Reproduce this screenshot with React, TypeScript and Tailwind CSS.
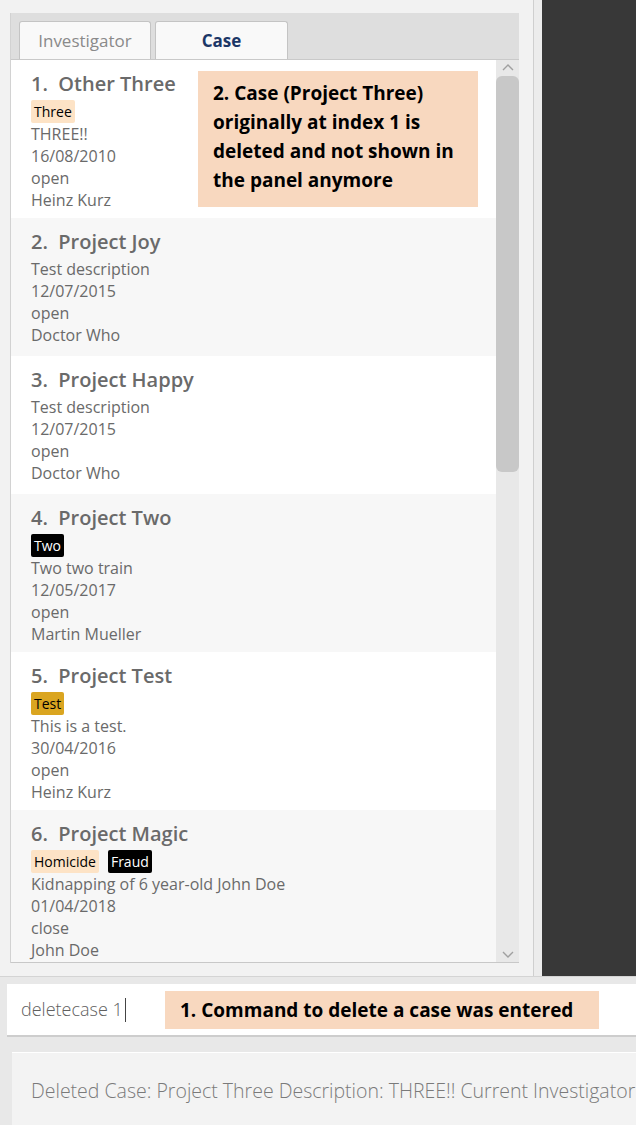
import React from 'react';

type Tag = { label: string; tone: 'peach' | 'black' | 'gold' };

type CaseItem = {
  title: string;
  tags: Tag[];
  lines: string[];
};

const cases: CaseItem[] = [
  { title: 'Other Three', tags: [{ label: 'Three', tone: 'peach' }], lines: ['THREE!!', '16/08/2010', 'open', 'Heinz Kurz'] },
  { title: 'Project Joy', tags: [], lines: ['Test description', '12/07/2015', 'open', 'Doctor Who'] },
  { title: 'Project Happy', tags: [], lines: ['Test description', '12/07/2015', 'open', 'Doctor Who'] },
  { title: 'Project Two', tags: [{ label: 'Two', tone: 'black' }], lines: ['Two two train', '12/05/2017', 'open', 'Martin Mueller'] },
  { title: 'Project Test', tags: [{ label: 'Test', tone: 'gold' }], lines: ['This is a test.', '30/04/2016', 'open', 'Heinz Kurz'] },
  {
    title: 'Project Magic',
    tags: [
      { label: 'Homicide', tone: 'peach' },
      { label: 'Fraud', tone: 'black' },
    ],
    lines: ['Kidnapping of 6 year-old John Doe', '01/04/2018', 'close', 'John Doe'],
  },
];

const toneClass = {
  peach: 'bg-[#fde3c6] text-black',
  black: 'bg-black text-white',
  gold: 'bg-[#daa520] text-black',
};

function CaseCard({ item, index }: { item: CaseItem; index: number }) {
  const shaded = index % 2 === 1;
  const hasTags = item.tags.length > 0;
  return (
    <div className={`pl-[20px] pt-[11px] ${hasTags ? 'pb-[7px]' : 'pb-[10px]'} ${shaded ? 'bg-[#f7f7f7]' : 'bg-white'}`}>
      <div className="text-[20px] leading-[26px] font-semibold text-[#6a6a6a] mb-[3px]">
        {index + 1}.&nbsp;&nbsp;{item.title}
      </div>
      {hasTags && (
        <div className="flex gap-[9px]">
          {item.tags.map((t) => (
            <span key={t.label} className={`px-[3px] rounded-[2px] text-[14px] leading-[23px] ${toneClass[t.tone]}`}>
              {t.label}
            </span>
          ))}
        </div>
      )}
      {item.lines.map((l, i) => (
        <div key={i} className="text-[16px] leading-[22px] text-[#6a6a6a]">
          {l}
        </div>
      ))}
    </div>
  );
}

function Note({ children, className }: { children: React.ReactNode; className: string }) {
  return <div className={`absolute bg-[#f8d8bf] text-black font-bold text-[19px] ${className}`}>{children}</div>;
}

export default function App() {
  return (
    <div
      className="w-[636px] h-[1125px] overflow-hidden bg-[#f2f2f2] flex flex-col"
      style={{ fontFamily: '"Open Sans", "Noto Sans", sans-serif' }}
    >
      {/* Top area */}
      <div className="h-[977px] flex shrink-0 border-b border-[#d4d4d4]">
        <div className="w-[533px] pt-[13px] pl-[10px] shrink-0">
          <div className="relative w-[509px] h-[950px] flex flex-col border-l border-[#d2d2d2]">
            {/* Tabs */}
            <div className="h-[47px] bg-[#dedede] flex items-end gap-[4px] pl-[8px] border-b border-[#c9c9c9]">
              <div className="w-[132px] h-[38px] bg-[#f9f9f9] border border-[#c4c4c4] border-b-0 rounded-t-[3px] flex items-center justify-center text-[17px] text-[#8a8a8a]">
                Investigator
              </div>
              <div className="w-[133px] h-[38px] bg-[#f9f9f9] border border-[#c4c4c4] border-b-0 rounded-t-[3px] flex items-center justify-center text-[17px] font-bold text-[#1c3767]">
                Case
              </div>
            </div>
            {/* List + scrollbar */}
            <div className="flex flex-1 min-h-0 border-b border-[#c8c8c8]">
              <div className="flex-1 overflow-hidden">
                {cases.map((c, i) => (
                  <CaseCard key={i} item={c} index={i} />
                ))}
              </div>
              <div className="w-[23px] bg-[#e8e8e8] flex flex-col items-center">
                <svg width="14" height="14" viewBox="0 0 14 14" className="mt-[1px]">
                  <path d="M2 9 L7 4 L12 9" fill="none" stroke="#a0a0a0" strokeWidth="1.4" />
                </svg>
                <div className="w-[23px] h-[396px] bg-[#c8c8c8] rounded-[6px] mt-[1px]" />
                <div className="flex-1" />
                <svg width="14" height="14" viewBox="0 0 14 14" className="mb-[1px]">
                  <path d="M2 5 L7 10 L12 5" fill="none" stroke="#a0a0a0" strokeWidth="1.4" />
                </svg>
              </div>
            </div>
            <Note className="left-[187px] top-[58px] w-[280px] h-[136px] pl-[15px] pt-[8px] leading-[29px]">
              2. Case (Project Three)
              <br />
              originally at index 1 is
              <br />
              deleted and not shown in
              <br />
              the panel anymore
            </Note>
          </div>
        </div>
        <div className="w-[9px] border-l border-[#cfcfcf] bg-[#ececec]" />
        <div className="flex-1 bg-[#383838]" />
      </div>
      {/* Command box */}
      <div className="pt-[7px] pl-[7px] bg-[#e8e8e8]">
        <div className="relative h-[53px] bg-white border-b-2 border-[#cdcdcd] flex items-center pl-[14px]">
          <span className="text-[18px] font-light text-[#606060]">deletecase 1</span>
          <span className="ml-[2px] w-[1px] h-[24px] bg-[#444]" />
          <Note className="left-[158px] top-[7px] w-[434px] h-[38px] pl-[15px] leading-[38px]">
            1. Command to delete a case was entered
          </Note>
        </div>
      </div>
      {/* Result box */}
      <div className="flex-1 bg-[#e8e8e8] pt-[15px] pl-[12px]">
        <div className="h-full bg-[#f3f3f3] border-t border-white pl-[19px] pt-[23px] overflow-hidden whitespace-nowrap text-[19.5px] font-light text-[#7a7a7a]">
          Deleted Case: Project Three Description: THREE!! Current Investigator:
        </div>
      </div>
    </div>
  );
}
